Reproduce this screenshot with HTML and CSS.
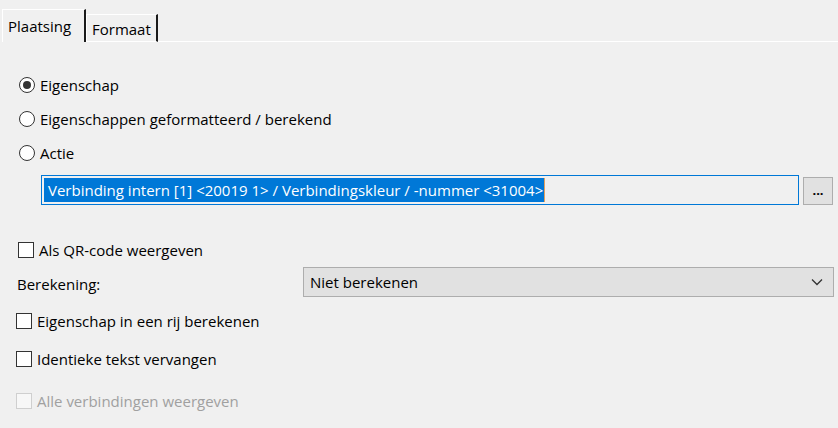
FILE: index.html
```html
<!DOCTYPE html>
<html lang="nl">
<head>
  <meta charset="UTF-8" />
  <title>Eigenschap</title>
  <link rel="stylesheet" href="styles.css">
</head>
<body>
  <div class="tabs">
    <div class="tab active">Plaatsing</div>
    <div class="tab">Formaat</div>
    <div class="tab-fill"></div>
  </div>

  <div class="panel">
    <div class="opt radio-row"><span class="radio checked"></span>Eigenschap</div>
    <div class="opt radio-row"><span class="radio"></span>Eigenschappen geformatteerd / berekend</div>
    <div class="opt radio-row"><span class="radio"></span>Actie</div>

    <div class="field-row">
      <div class="field"><span class="sel">Verbinding intern [1] &lt;20019 1&gt; / Verbindingskleur / -nummer &lt;31004&gt;</span></div>
      <div class="btn-more">...</div>
    </div>

    <div class="opt check-row qr"><span class="check"></span>Als QR-code weergeven</div>

    <div class="calc-row">
      <div class="calc-label">Berekening:</div>
      <div class="combo">
        <span>Niet berekenen</span>
        <svg width="12" height="8" viewBox="0 0 12 8"><path d="M1 1.5 L6 6.5 L11 1.5" fill="none" stroke="#333" stroke-width="1.3"/></svg>
      </div>
    </div>

    <div class="opt check-row row-a"><span class="check"></span>Eigenschap in een rij berekenen</div>
    <div class="opt check-row row-b"><span class="check"></span>Identieke tekst vervangen</div>
    <div class="opt check-row row-c disabled"><span class="check"></span>Alle verbindingen weergeven</div>
  </div>
</body>
</html>
```

FILE: styles.css
```css
body {
  margin: 0;
  background-color: #f0f0f0;
  font-family: "Open Sans", "Noto Sans", sans-serif;
  font-size: 15px;
  color: #000;
  width: 838px;
  height: 428px;
  overflow: hidden;
}
.tabs {
  display: flex;
  align-items: flex-end;
  height: 42px;
  padding-left: 2px;
}
.tab {
  box-sizing: border-box;
  height: 28px;
  width: 72px;
  padding: 3px 0 0 5px;
  border-top: 1px solid #fff;
  border-left: 1px solid #fff;
  border-right: 2px solid #1a1a1a;
  border-bottom: 1px solid #fff;
  line-height: 22px;
}
.tab.active {
  height: 33px;
  width: 84px;
  padding: 5px 0 0 5px;
  border-bottom: none;
}
.tab-fill {
  flex: 1;
  border-bottom: 1px solid #fff;
}
.panel {
  padding-top: 26px;
}
.opt {
  display: flex;
  align-items: center;
}
.radio-row {
  height: 34px;
  padding-left: 19px;
}
.radio {
  box-sizing: border-box;
  width: 16px;
  height: 16px;
  border: 1px solid #333;
  border-radius: 50%;
  background: #fff;
  margin-right: 5px;
  display: flex;
  align-items: center;
  justify-content: center;
}
.radio.checked::after {
  content: "";
  width: 8px;
  height: 8px;
  border-radius: 50%;
  background: #333;
}
.field-row {
  display: flex;
  align-items: flex-end;
  margin-top: 5px;
  padding-left: 41px;
}
.field {
  box-sizing: border-box;
  width: 758px;
  height: 30px;
  border: 1px solid #0078d7;
  background: #f0f0f0;
  padding: 2px;
  white-space: nowrap;
}
.sel {
  display: inline-block;
  height: 24px;
  line-height: 24px;
  padding: 0 1px 0 4px;
  background: #0078d7;
  color: #fff;
  border-right: 1px solid #e0a060;
}
.btn-more {
  box-sizing: border-box;
  width: 30px;
  height: 28px;
  margin-left: 4px;
  background: #e1e1e1;
  border: 1px solid #adadad;
  text-align: center;
  line-height: 24px;
  font-weight: bold;
  font-size: 13px;
}
.check-row {
  height: 34px;
}
.check {
  box-sizing: border-box;
  width: 16px;
  height: 16px;
  border: 1px solid #333;
  background: #fff;
  margin-right: 5px;
}
.check-row.qr {
  margin-top: 28px;
  padding-left: 18px;
}
.calc-row {
  display: flex;
  align-items: center;
  height: 30px;
  padding-left: 17px;
}
.calc-label {
  width: 286px;
  padding-top: 4px;
}
.combo {
  box-sizing: border-box;
  width: 531px;
  height: 30px;
  background: #e1e1e1;
  border: 1px solid #adadad;
  display: flex;
  align-items: center;
  justify-content: space-between;
  padding: 0 10px 0 6px;
}
.row-a {
  margin-top: 7px;
  height: 34px;
  padding-left: 16px;
}
.row-b {
  margin-top: 4px;
  height: 34px;
  padding-left: 16px;
}
.row-c {
  margin-top: 8px;
  height: 34px;
  padding-left: 16px;
}
.disabled {
  color: #a0a0a0;
}
.disabled .check {
  border-color: #cfcfcf;
  background: #f7f7f7;
}
```
